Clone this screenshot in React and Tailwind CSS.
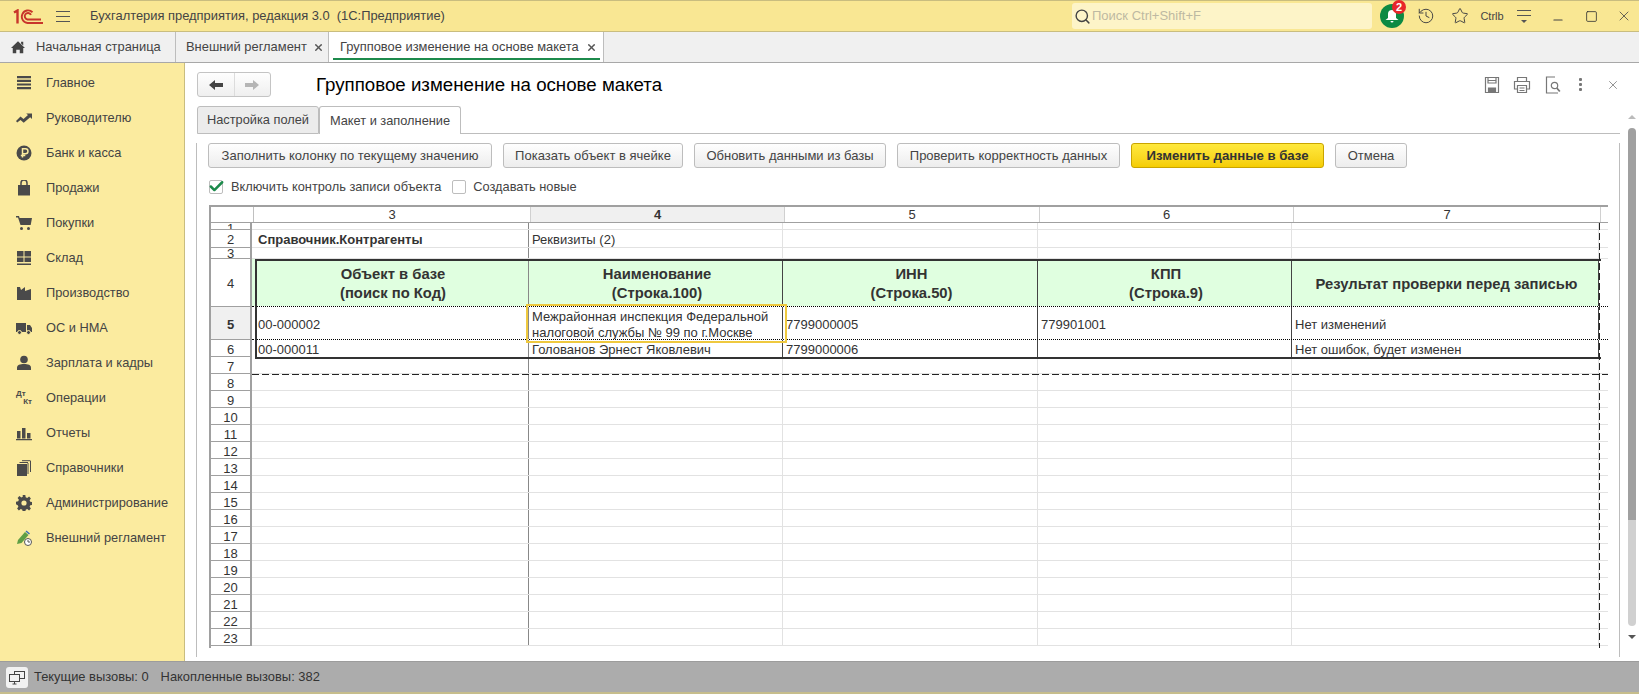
import React from 'react';
import { X, Search, History, Star, Minus, Square, Check } from 'lucide-react';

const Ic = ({ children, box = '0 0 16 16' }) => (
    <svg viewBox={box} className="w-4 h-4 text-[#4a4a4a]" fill="currentColor">{children}</svg>
);

const menu = [
    ['Главное', <Ic><path d="M1 1h14v2.200H1zM1 4.700h14v2.200H1zM1 8.400h14v2.200H1zM1 12.100h14v2.200H1z" /></Ic>],
    ['Руководителю', <Ic><path d="M0 11l4.500-4.500 3 2.500L12 5l-1.800-1.500H16V9l-1.800-1.700-6.500 5.500-3.200-2.800L1.200 12.500z" /></Ic>],
    ['Банк и касса', <Ic><circle cx="8" cy="8" r="7.500" /><path d="M6.500 12.500V3.800h3a2.400 2.400 0 010 4.900h-3M4.800 10.500h4.500" fill="none" stroke="#fbeb9f" strokeWidth="1.500" /></Ic>],
    ['Продажи', <Ic><path d="M2 5h12v10.500H2z" /><path d="M5 7V3a3 3 0 016 0v4" fill="none" stroke="currentColor" strokeWidth="1.500" /></Ic>],
    ['Покупки', <Ic><path d="M0 1h3l.6 2H16l-1.300 7H4.500L2 2.500H0z" /><circle cx="5.500" cy="13.500" r="1.500" /><circle cx="12.500" cy="13.500" r="1.500" /></Ic>],
    ['Склад', <Ic><path d="M1 1h6.500v5.500H1zM8.500 1H15v5.500H8.500zM1 7.500h6.500V12H1zM8.500 7.500H15V12H8.500zM1 13.500h14V15H1z" /></Ic>],
    ['Производство', <Ic><path d="M1 15V2h3l1 3 4-3v4l6-2v11z" /></Ic>],
    ['ОС и НМА', <Ic><path d="M0 3h10v9H0zM11 5h3l2 3v4h-5z" /><circle cx="3.500" cy="12.500" r="2" stroke="#fbeb9f" /><circle cx="12.500" cy="12.500" r="2" stroke="#fbeb9f" /></Ic>],
    ['Зарплата и кадры', <Ic><circle cx="8" cy="4.500" r="3.800" /><path d="M1 15v-2.500C1 10 4 9 8 9s7 1 7 3.500V15z" /></Ic>],
    ['Операции', <span className="w-4 h-4 text-[8px] leading-[8px] font-bold text-[#4a4a4a] flex flex-col"><span>Дт</span><span className="self-end">Кт</span></span>],
    ['Отчеты', <Ic><path d="M1 6h3.500v7.500H1zM6 3h3.500v10.500H6zM11 8h3.500v5.500H11zM0 14h16v1.200H0z" /></Ic>],
    ['Справочники', <Ic><path d="M1 4h10v12H1z" /><path d="M12 3v11M14.500 1v11M3.500 2.500H12M6 .7h8.500" fill="none" stroke="currentColor" /></Ic>],
    ['Администрирование', <Ic><path d="M6.700 0h2.600l.4 2.200 1.500.7 1.900-1.300 1.800 1.800-1.300 1.900.7 1.500 2.200.4v2.600l-2.200.4-.7 1.500 1.300 1.900-1.800 1.800-1.900-1.300-1.500.7-.4 2.200H6.700l-.4-2.200-1.500-.7-1.900 1.300-1.800-1.800 1.300-1.900-.7-1.500L0 9.300V6.700l2.200-.4.7-1.500-1.300-1.900 1.800-1.800 1.900 1.300 1.500-.7z" /><circle cx="8" cy="8" r="2.600" fill="#fbeb9f" /></Ic>],
    ['Внешний регламент', <svg viewBox="0 0 16 16" className="w-4 h-4"><path d="M1 14l1-4 7-8 3.500 3-7 8z" fill="#5f9e45" /><path d="M9.500 1.500l1-1 3.500 3-1 1z" fill="#3b6fb5" /><circle cx="12" cy="12" r="3.500" fill="#fff" stroke="#555" /><path d="M12 10v2h2" fill="none" stroke="#555" /></svg>],
];

const CELL = 'h-full shrink-0 overflow-hidden whitespace-nowrap border-r';
const widths = ['w-[277px]', 'w-[254px]', 'w-[255px]', 'w-[254px]', 'w-[307px]', 'w-[9px]'];

const rows = [
    { n: 1, h: 'h-[7px]' },
    { n: 2, h: 'h-[18px]', cells: [<b className="text-[#333]">Справочник.Контрагенты</b>, 'Реквизиты (2)'] },
    { n: 3, h: 'h-[11px]' },
    { n: 4, h: 'h-[48px]', head: true },
    { n: 5, h: 'h-[33px]', active: true, data: true, cells: ['00-000002', ['Межрайонная инспекция Федеральной', 'налоговой службы № 99 по г.Москве'], '7799000005', '779901001', 'Нет изменений'] },
    { n: 6, h: 'h-[17px]', data: true, last: true, cells: ['00-000011', 'Голованов Эрнест Яковлевич', '7799000006', '', 'Нет ошибок, будет изменен'] },
    ...Array.from({ length: 17 }, (_, i) => ({ n: i + 7, h: 'h-[17px]' })),
];

const heads = [['Объект в базе', '(поиск по Код)'], ['Наименование', '(Строка.100)'], ['ИНН', '(Строка.50)'], ['КПП', '(Строка.9)'], ['Результат проверки перед записью']];

const Sheet = () => (
    <div className="relative ml-[12px] w-[1399px] h-[443px] overflow-hidden border-t-2 border-l-2 border-[#a0a0a0] text-[13px] text-[#333]">
        <div className="flex h-[16px] border-b border-[#a0a0a0] leading-[15px] text-center">
            <div className="w-[43px] shrink-0 border-r border-[#c0c0c0]" />
            {[3, 4, 5, 6, 7].map((c, i) => (
                <div key={c} className={`${CELL} ${widths[i]} border-[#d0d0d0] ${c === 4 ? 'bg-[#f0f0f0] font-bold' : ''}`}>{c}</div>
            ))}
            <div className="w-[9px] shrink-0" />
        </div>
        {rows.map((r) => (
            <div key={r.n} className={`flex ${r.h}`}>
                <div className={`w-[41px] shrink-0 border-b border-r-2 border-[#a0a0a0] overflow-hidden text-center ${r.active ? 'bg-[#f0f0f0] font-bold' : ''} ${r.n === 1 || r.n === 3 ? 'leading-[9px] pt-[1px]' : 'flex items-center justify-center pt-[3px]'}`}>{r.n}</div>
                <div className="w-[2px] shrink-0" />
                <div className={`flex ${r.h} -ml-[2px] ${r.head || r.data ? '' : 'border-b border-[#e2e2e2]'} ${r.head || r.active ? 'border-b border-dotted border-black' : ''}`}>
                    {widths.map((w, i) => {
                        const c = r.cells && r.cells[i];
                        const dark = (r.head || r.data) && i < 5;
                        return (
                            <div key={w} className={`${CELL} ${w} ${i === 5 ? 'border-r-0' : ''} ${i === 0 ? 'border-[#888]' : dark ? 'border-[#444]' : 'border-[#e2e2e2]'} ${r.head && i < 5 ? 'bg-[#e0ffe0]' : ''} ${i === 0 ? 'pl-[6px]' : 'pl-[3px]'} ${r.data || r.n === 2 ? 'flex items-center pt-[3px]' : ''}`}>
                                {r.head && heads[i] && (
                                    <div className="h-full flex flex-col justify-center pt-[3px] text-center font-bold text-[14.8px] leading-[19px]">
                                        {heads[i].map((t) => <div key={t}>{t}</div>)}
                                    </div>
                                )}
                                {Array.isArray(c) ? <div className="leading-[16px]">{c.map((t) => <div key={t}>{t}</div>)}</div> : c}
                            </div>
                        );
                    })}
                </div>
            </div>
        ))}
        {/* thick table frame, dashed page breaks and the current cell lie over the grid */}
        <div className="absolute left-[44px] top-[52px] w-[1346px] h-[100px] border-y-2 border-l-2 border-[#333] pointer-events-none" />
        <div className="absolute left-[41px] top-[167px] right-0 h-px bg-[repeating-linear-gradient(90deg,#222_0,#222_7px,transparent_7px,transparent_10px)]" />
        <div className="absolute left-[1388px] top-[16px] bottom-0 w-px bg-[repeating-linear-gradient(180deg,#222_0,#222_7px,transparent_7px,transparent_10px)]" />
        <div className="absolute left-[315px] top-[97px] w-[261px] h-[39px] border-2 border-[#efc93f]" />
    </div>
);

const Btn = ({ children, w, main }) => (
    <button className={`${w} h-[25px] shrink-0 rounded-[3px] border text-center ${main ? 'text-[13.2px] border-[#c9a400] bg-gradient-to-b from-[#ffe93b] to-[#f5cd00] font-bold text-[#333]' : 'text-[13px] border-[#bdbdbd] bg-gradient-to-b from-[#fefefe] to-[#ededed] text-[#444]'}`}>
        {children}
    </button>
);

export default function App() {
    return (
        <div className="w-[1639px] h-[694px] flex flex-col overflow-hidden bg-white [font-family:'Liberation_Sans',Arial,sans-serif]">
            {/* title bar */}
            <div className="h-8 shrink-0 flex items-center bg-[#f9e793] border-y border-[#c9bd7f] text-[#444] text-[13px]">
                <svg viewBox="0 0 30 15" className="ml-[13px] w-[30px] h-[15px]" fill="none" stroke="#c8352b" strokeWidth="1.900">
                    <path d="M1 3.500L4.500 1.500V14.500" strokeWidth="2.400" />
                    <path d="M19.500 3.200A6.300 6.300 0 1 0 14.500 14H30" />
                    <path d="M18 5.800A3.300 3.300 0 1 0 14.500 10.500H28" />
                </svg>
                <div className="ml-[13px] w-[14px] flex flex-col gap-[4px]">
                    <div className="h-px bg-[#555]" /><div className="h-px bg-[#555]" /><div className="h-px bg-[#555]" />
                </div>
                <div className="ml-[20px] whitespace-pre text-[12.9px]">Бухгалтерия предприятия, редакция 3.0  (1С:Предприятие)</div>
                <div className="ml-auto w-[300px] h-[26px] flex items-center rounded-[3px] bg-[#fdf4c8] text-[#bdb9a2]">
                    <Search size={17} className="ml-[2px] text-[#444]" />
                    <span className="ml-[1px]">Поиск Ctrl+Shift+F</span>
                </div>
                <div className="relative ml-2 w-6 h-6 rounded-full bg-[#0d8a43] flex items-center justify-center">
                    <svg viewBox="0 0 16 16" className="w-4 h-4" fill="#fff"><path d="M8 2a4 4 0 014 4v4l2.500 2h-13L4 10V6a4 4 0 014-4zM6.500 13h3a1.500 1.500 0 01-3 0z" /></svg>
                    <span className="absolute -right-[2px] -top-[4px] w-[14px] h-[14px] rounded-full bg-[#e8262b] text-white text-[11px] leading-[14px] text-center font-bold">2</span>
                </div>
                <History size={18} strokeWidth={1.300} className="ml-[13px] text-[#444]" />
                <Star size={18} strokeWidth={1.300} className="ml-[16px] text-[#444]" />
                <span className="ml-[8px] w-[30px] text-[11px] text-center">Ctrlb</span>
                <div className="ml-[10px] w-[14px] flex flex-col items-center gap-[4px]">
                    <div className="h-px w-full bg-[#555]" /><div className="h-px w-full bg-[#555]" />
                    <div className="w-0 h-0 border-x-[3px] border-x-transparent border-t-[3px] border-t-[#555]" />
                </div>
                <Minus size={14} className="ml-[20px] mt-[8px] text-[#444]" />
                <Square size={13} strokeWidth={1.500} className="ml-[20px] text-[#333]" />
                <X size={16} strokeWidth={1.200} className="ml-[18px] mr-[7px] text-[#444]" />
            </div>

            {/* open tabs */}
            <div className="h-[31px] shrink-0 flex bg-[#f0f0f0] border-b border-[#a8a8a8] text-[12.9px] text-[#444]">
                <div className="w-[176px] flex items-center border-r border-[#bdbdbd]">
                    <svg viewBox="0 0 16 16" className="ml-[11px] mr-[11px] w-[14px] h-[14px]" fill="#444"><path d="M8 1.500L16 9h-2v6h-4v-4H6v4H2V9H0zM11.500 2H14v4.300l-2.500-2.300z" /></svg>
                    Начальная страница
                </div>
                <div className="w-[153px] flex items-center pl-[10px] border-r border-[#bdbdbd]">
                    Внешний регламент
                    <X size={11} strokeWidth={3} className="ml-[6px] text-[#555]" />
                </div>
                <div className="w-[275px] flex items-center pl-[11px] bg-white border-r border-[#bdbdbd] relative">
                    Групповое изменение на основе макета
                    <X size={11} strokeWidth={3} className="ml-[7px] text-[#555]" />
                    <div className="absolute left-[4px] right-[3px] bottom-[2px] h-[2px] bg-[#1d8a4c]" />
                </div>
            </div>

            <div className="flex-1 flex min-h-0">
                {/* section panel */}
                <div className="w-[185px] shrink-0 bg-[#fbeb9f] border-r border-[#c9bd7f] pt-[2px] text-[12.8px] text-[#444]">
                    {menu.map(([label, icon]) => (
                        <div key={label} className="h-[35px] flex items-center pl-4">
                            {icon}
                            <span className="ml-[14px]">{label}</span>
                        </div>
                    ))}
                </div>

                <div className="flex-1 min-w-0">
                    {/* form header */}
                    <div className="h-[43px] flex items-center">
                        <div className="ml-[12px] w-[74px] h-[25px] flex rounded-[3px] border border-[#c4c4c4] bg-gradient-to-b from-[#fefefe] to-[#efefef]">
                            <div className="flex-1 flex items-center justify-center border-r border-[#dcdcdc]">
                                <svg viewBox="0 0 14 10" className="w-[14px] h-[10px]" fill="#444"><path d="M0 5l6-5v3h8v4H6v3z" /></svg>
                            </div>
                            <div className="flex-1 flex items-center justify-center">
                                <svg viewBox="0 0 14 10" className="w-[14px] h-[10px]" fill="#b5b5b5"><path d="M14 5L8 0v3H0v4h8v3z" /></svg>
                            </div>
                        </div>
                        <h1 className="ml-[45px] pt-[1px] text-[18.7px] text-black">Групповое изменение на основе макета</h1>
                        <div className="ml-auto flex items-center">
                            <svg viewBox="0 0 16 18" className="w-[16px] h-[18px]" fill="none" stroke="#777" strokeWidth="1.200">
                                <path d="M1.500 1.500h13v15h-13z" /><path d="M4 2v5h8V2M4 4.500h8" /><path d="M4.500 12h7v4.500h-7z" fill="#777" />
                            </svg>
                            <svg viewBox="0 0 18 18" className="ml-[13px] w-[18px] h-[18px]" fill="none" stroke="#777" strokeWidth="1.200">
                                <path d="M4.500 5V1.500h9V5M4 13H1.500V5.500h15V13H14" /><path d="M4.500 9.500h9v7h-9zM6.500 12h5M6.500 14.500h5" />
                            </svg>
                            <svg viewBox="0 0 18 18" className="ml-[13px] w-[18px] h-[18px]" fill="none" stroke="#777" strokeWidth="1.200">
                                <path d="M11 1H2.500v16H14" /><circle cx="10.500" cy="9.500" r="3.200" /><path d="M12.800 12l3 3.500" strokeWidth="1.800" />
                            </svg>
                            <div className="ml-[17px] w-[3px] flex flex-col gap-[2px]">
                                <div className="h-[3px] rounded-[1px] bg-[#777]" /><div className="h-[3px] rounded-[1px] bg-[#777]" /><div className="h-[3px] rounded-[1px] bg-[#777]" />
                            </div>
                            <X size={14} strokeWidth={1.200} className="ml-[24px] mr-[19px] text-[#666]" />
                        </div>
                    </div>

                    <div className="flex h-[542px]">
                        <div className="w-[1435px] shrink-0">
                            <div className="flex h-[28px] text-[12.8px] text-[#444]">
                                <div className="ml-[12px] w-[122px] flex items-center justify-center rounded-t-[3px] border border-[#bdbdbd] bg-[#ececec]">Настройка полей</div>
                                <div className="w-[142px] flex items-center justify-center rounded-t-[3px] border-x border-t border-[#bdbdbd]">Макет и заполнение</div>
                                <div className="flex-1 border-b border-[#bdbdbd]" />
                            </div>
                            <div className="ml-[11px] h-[514px] border-x border-[#bdbdbd]">
                                <div className="flex gap-[11px] mt-[9px] ml-[11px]">
                                    <Btn w="w-[284px]">Заполнить колонку по текущему значению</Btn>
                                    <Btn w="w-[180px]">Показать объект в ячейке</Btn>
                                    <Btn w="w-[192px]">Обновить данными из базы</Btn>
                                    <Btn w="w-[223px]">Проверить корректность данных</Btn>
                                    <Btn w="w-[193px]" main>Изменить данные в базе</Btn>
                                    <Btn w="w-[72px]">Отмена</Btn>
                                </div>
                                <div className="flex items-center h-[15px] mt-[11px] ml-[12px] text-[12.8px] text-[#444]">
                                    <div className="w-[14px] h-[14px] rounded-[2px] border border-[#bdbdbd] flex items-center justify-center">
                                        <Check size={17} strokeWidth={3.500} className="text-[#1d8a4c] shrink-0" />
                                    </div>
                                    <span className="ml-[8px]">Включить контроль записи объекта</span>
                                    <div className="ml-[11px] w-[14px] h-[14px] rounded-[2px] border border-[#bdbdbd]" />
                                    <span className="ml-[7px]">Создавать новые</span>
                                </div>
                                <div className="mt-[11px]"><Sheet /></div>
                            </div>
                        </div>
                        {/* scrollbar */}
                        <div className="flex-1 flex flex-col items-center pl-[5px]">
                            <div className="mt-[9px] w-0 h-0 border-x-[4px] border-x-transparent border-b-[4px] border-b-[#bbb]" />
                            <div className="mt-[9px] w-[8px] h-[392px] rounded-t-[4px] bg-[#a0a0a0]" />
                            <div className="w-[8px] h-[106px] rounded-b-[4px] bg-[#d0d0d0]" />
                            <div className="mt-[9px] w-0 h-0 border-x-[4px] border-x-transparent border-t-[4px] border-t-[#555]" />
                        </div>
                    </div>
                </div>
            </div>

            {/* status bar */}
            <div className="h-[33px] shrink-0 flex items-center bg-[#acacac] border-t border-[#9c9c9c] border-b-2 border-b-[#c6bd8c] text-[12.9px] text-[#333]">
                <div className="ml-[6px] w-[22px] h-[21px] rounded-[3px] bg-[#f2f2f2] flex items-center justify-center">
                    <svg viewBox="0 0 16 16" className="w-4 h-4" fill="#f2f2f2" stroke="#444"><rect x="5.500" y="2.500" width="10" height="7" /><rect x=".5" y="5.500" width="10" height="7" /><path d="M3.500 15h4M5.500 12.500V15" /></svg>
                </div>
                <span className="ml-[6px]">Текущие вызовы: 0</span>
                <span className="ml-[12px]">Накопленные вызовы: 382</span>
            </div>
        </div>
    );
}
